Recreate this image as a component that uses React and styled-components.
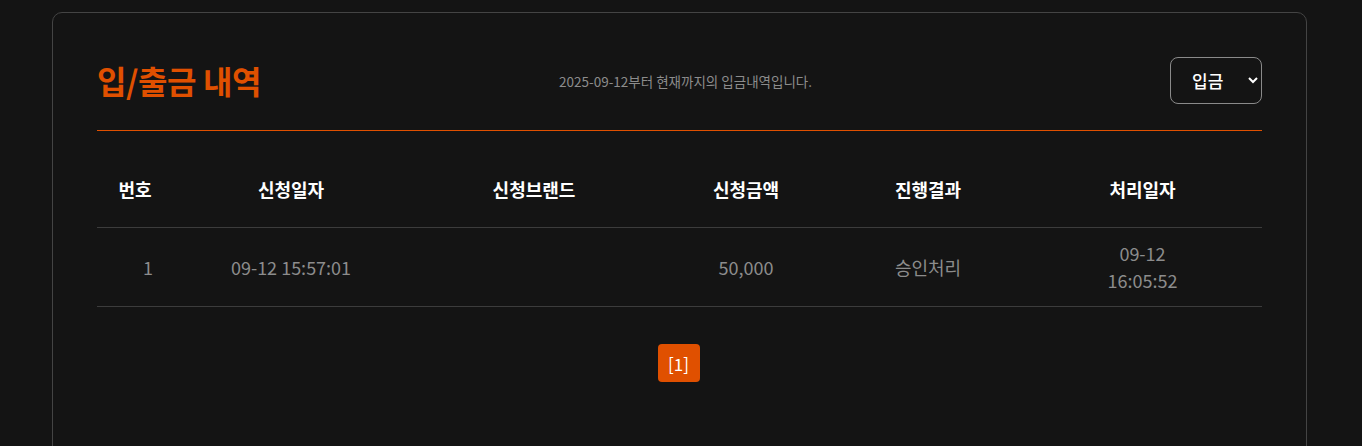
import React, { useState } from "react";
import styled, { createGlobalStyle } from "styled-components";

const GlobalStyle = createGlobalStyle`
  html, body {
    margin: 0;
    padding: 0;
    background: #141414;
    font-family: "Noto Sans CJK KR", "Noto Sans", sans-serif;
  }
`;

const rows = [
  {
    no: 1,
    requested: "09-12 15:57:01",
    brand: "",
    amount: "50,000",
    result: "승인처리",
    processed: ["09-12", "16:05:52"],
  },
];

const columns = "76px 236px 250px 174px 190px 1fr";

const App = () => {
  const [type, setType] = useState("입금");

  return (
    <>
      <GlobalStyle />
      <Page>
        <Card>
          <Header>
            <Title>입/출금 내역</Title>
            <Subtitle>2025-09-12부터 현재까지의 {type}내역입니다.</Subtitle>
            <Select value={type} onChange={(e) => setType(e.target.value)}>
              <option value="입금">입금</option>
              <option value="출금">출금</option>
            </Select>
          </Header>

          <Table>
            <HeadRow>
              <HeadCell>번호</HeadCell>
              <HeadCell>신청일자</HeadCell>
              <HeadCell>신청브랜드</HeadCell>
              <HeadCell>신청금액</HeadCell>
              <HeadCell>진행결과</HeadCell>
              <HeadCell>처리일자</HeadCell>
            </HeadRow>
            {rows.map((r) => (
              <BodyRow key={r.no}>
                <Cell $shift>{r.no}</Cell>
                <Cell>{r.requested}</Cell>
                <Cell>{r.brand}</Cell>
                <Cell>{r.amount}</Cell>
                <Cell>{r.result}</Cell>
                <Cell>
                  {r.processed[0]}
                  <br />
                  {r.processed[1]}
                </Cell>
              </BodyRow>
            ))}
          </Table>

          <Pagination>
            <PageButton>[1]</PageButton>
          </Pagination>
        </Card>
      </Page>
    </>
  );
};

const Page = styled.div`
  padding: 12px 55px 0 52px;
`;

const Card = styled.div`
  border: 1px solid #444;
  border-radius: 10px;
  padding: 44px 44px 60px 44px;
  min-height: 400px;
`;

const Header = styled.div`
  display: flex;
  align-items: center;
  height: 48px;
  padding-bottom: 25px;
  border-bottom: 1px solid #e05000;
`;

const Title = styled.h1`
  margin: -3px 0 0 0;
  flex: 0 0 462px;
  font-size: 32px;
  font-weight: 700;
  color: #e05000;
  letter-spacing: -0.4px;
`;

const Subtitle = styled.p`
  margin: 0;
  font-size: 13.5px;
  color: #8c8c8c;
`;

const Select = styled.select`
  margin-left: auto;
  width: 92px;
  height: 47px;
  margin-top: -2px;
  padding: 0 10px 0 17px;
  background: #141414;
  color: #fff;
  border: 1px solid #8a8a8a;
  border-radius: 8px;
  font-family: "Noto Sans CJK KR", sans-serif;
  font-size: 17px;
  font-weight: 500;
  outline: none;
`;

const Table = styled.div`
  margin-top: 29px;
`;

const HeadRow = styled.div`
  display: grid;
  grid-template-columns: ${columns};
  height: 57px;
  padding-bottom: 10px;
  align-items: center;
  border-bottom: 1px solid #3c3c3c;
`;

const HeadCell = styled.div`
  text-align: center;
  color: #fff;
  font-size: 18px;
  font-weight: 700;
`;

const BodyRow = styled.div`
  display: grid;
  grid-template-columns: ${columns};
  height: 78px;
  align-items: center;
  border-bottom: 1px solid #3c3c3c;
`;

const Cell = styled.div`
  text-align: center;
  color: #8c8c8c;
  font-size: 18px;
  line-height: 27px;
  padding-left: ${({ $shift }) => ($shift ? "26px" : "0")};
`;

const Pagination = styled.div`
  display: flex;
  justify-content: center;
  margin-top: 37px;
`;

const PageButton = styled.button`
  width: 42px;
  height: 38px;
  margin-left: -2px;
  border: none;
  border-radius: 4px;
  background: #e05000;
  color: #fff;
  font-family: "Noto Sans CJK KR", sans-serif;
  font-size: 17px;
  padding: 0;
`;

export default App;
